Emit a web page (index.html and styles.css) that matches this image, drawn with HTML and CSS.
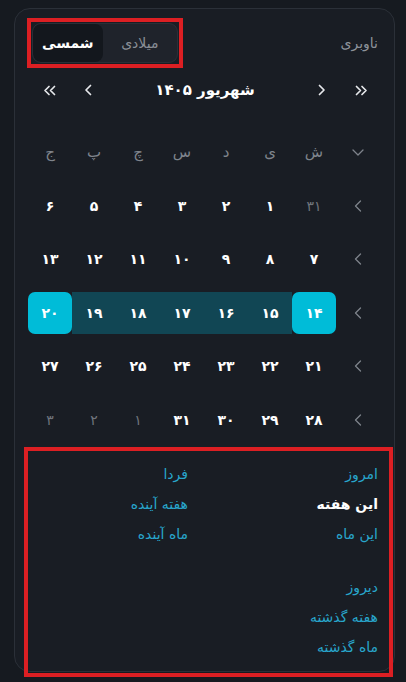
FILE: index.html
```html
<!DOCTYPE html>
<html lang="fa">
<head>
<meta charset="utf-8">
<title>تقویم</title>
<link rel="stylesheet" href="styles.css">
</head>
<body>
<div class="card">
  <div class="head">
    <span class="label">ناوبری</span>
    <div class="seg">
      <span class="opt">میلادی</span>
      <span class="opt on">شمسی</span>
    </div>
  </div>

  <div class="nav">
    <button class="nb"><svg width="13" height="11" viewBox="0 0 13 11"><path d="M1.5 1.5 L5.5 5.5 L1.5 9.5 M7 1.5 L11 5.5 L7 9.5" fill="none" stroke="currentColor" stroke-width="1.7" stroke-linecap="round" stroke-linejoin="round"/></svg></button>
    <button class="nb"><svg width="8" height="12" viewBox="0 0 8 12"><path d="M1.5 1.5 L6 6 L1.5 10.5" fill="none" stroke="currentColor" stroke-width="1.7" stroke-linecap="round" stroke-linejoin="round"/></svg></button>
    <div class="title">شهریور ۱۴۰۵</div>
    <button class="nb"><svg width="8" height="12" viewBox="0 0 8 12"><path d="M6.5 1.5 L2 6 L6.5 10.5" fill="none" stroke="currentColor" stroke-width="1.7" stroke-linecap="round" stroke-linejoin="round"/></svg></button>
    <button class="nb"><svg width="13" height="11" viewBox="0 0 13 11"><path d="M6 1.5 L2 5.5 L6 9.5 M11.5 1.5 L7.5 5.5 L11.5 9.5" fill="none" stroke="currentColor" stroke-width="1.7" stroke-linecap="round" stroke-linejoin="round"/></svg></button>
  </div>

  <div class="grid">
    <span class="wk"><svg width="12" height="7" viewBox="0 0 12 7"><path d="M1 1 L6 6 L11 1" fill="none" stroke="currentColor" stroke-width="1.3" stroke-linecap="round" stroke-linejoin="round"/></svg></span>
    <span class="wd">ش</span><span class="wd">ی</span><span class="wd">د</span><span class="wd">س</span><span class="wd">چ</span><span class="wd">پ</span><span class="wd">ج</span>

    <span class="wk"><svg width="8" height="12" viewBox="0 0 8 12"><path d="M6.5 1 L1.5 6 L6.5 11" fill="none" stroke="currentColor" stroke-width="1.3" stroke-linecap="round" stroke-linejoin="round"/></svg></span>
    <span class="d out">۳۱</span><span class="d">۱</span><span class="d">۲</span><span class="d">۳</span><span class="d">۴</span><span class="d">۵</span><span class="d">۶</span>

    <span class="wk"><svg width="8" height="12" viewBox="0 0 8 12"><path d="M6.5 1 L1.5 6 L6.5 11" fill="none" stroke="currentColor" stroke-width="1.3" stroke-linecap="round" stroke-linejoin="round"/></svg></span>
    <span class="d">۷</span><span class="d">۸</span><span class="d">۹</span><span class="d">۱۰</span><span class="d">۱۱</span><span class="d">۱۲</span><span class="d">۱۳</span>

    <span class="wk"><svg width="8" height="12" viewBox="0 0 8 12"><path d="M6.5 1 L1.5 6 L6.5 11" fill="none" stroke="currentColor" stroke-width="1.3" stroke-linecap="round" stroke-linejoin="round"/></svg></span>
    <span class="d sel">۱۴</span><span class="d range">۱۵</span><span class="d range">۱۶</span><span class="d range">۱۷</span><span class="d range">۱۸</span><span class="d range">۱۹</span><span class="d sel">۲۰</span>

    <span class="wk"><svg width="8" height="12" viewBox="0 0 8 12"><path d="M6.5 1 L1.5 6 L6.5 11" fill="none" stroke="currentColor" stroke-width="1.3" stroke-linecap="round" stroke-linejoin="round"/></svg></span>
    <span class="d">۲۱</span><span class="d">۲۲</span><span class="d">۲۳</span><span class="d">۲۴</span><span class="d">۲۵</span><span class="d">۲۶</span><span class="d">۲۷</span>

    <span class="wk"><svg width="8" height="12" viewBox="0 0 8 12"><path d="M6.5 1 L1.5 6 L6.5 11" fill="none" stroke="currentColor" stroke-width="1.3" stroke-linecap="round" stroke-linejoin="round"/></svg></span>
    <span class="d">۲۸</span><span class="d">۲۹</span><span class="d">۳۰</span><span class="d">۳۱</span><span class="d out">۱</span><span class="d out">۲</span><span class="d out">۳</span>
  </div>

  <div class="links">
    <div class="lgroup">
      <a class="lk">امروز</a><a class="lk">فردا</a>
      <a class="lk active">این هفته</a><a class="lk">هفته آینده</a>
      <a class="lk">این ماه</a><a class="lk">ماه آینده</a>
    </div>
    <div class="lgroup">
      <a class="lk">دیروز</a><span></span>
      <a class="lk">هفته گذشته</a><span></span>
      <a class="lk">ماه گذشته</a><span></span>
    </div>
  </div>
</div>

<div class="mark mark-top"></div>
<div class="mark mark-bottom"></div>
</body>
</html>
```

FILE: styles.css
```css
* { box-sizing: border-box; }

html, body {
  margin: 0;
  padding: 0;
  background: #161a20;
}

body {
  width: 406px;
  height: 682px;
  overflow: hidden;
  font-family: "DejaVu Sans", "Noto Sans", sans-serif;
  color: #e8eaed;
  direction: ltr;
}

.card {
  direction: rtl;
  margin: 8px 11px 0 14px;
  width: 381px;
  height: 664px;
  border: 1px solid #2b3038;
  border-radius: 16px;
  background: #191d24;
  display: flex;
  flex-direction: column;
}

.head {
  display: flex;
  align-items: center;
  justify-content: space-between;
  padding: 14px 16px 0 17px;
  height: 54px;
}

.label {
  font-size: 14px;
  color: #8d929a;
}

.seg {
  display: flex;
  width: 146px;
  height: 40px;
  border: 1px solid #2a2f37;
  border-radius: 9px;
  background: #1f232b;
  overflow: hidden;
}

.opt {
  display: flex;
  align-items: center;
  justify-content: center;
  font-size: 14px;
  color: #8a8f97;
}

.opt:first-child { width: 75px; }

.opt.on {
  width: 70px;
  background: #13171d;
  color: #ffffff;
  font-weight: 700;
  border-radius: 8px;
}

.nav {
  display: flex;
  align-items: center;
  height: 32px;
  margin-top: 11px;
  padding: 0 17px 0 18px;
  gap: 7px;
}

.nb {
  width: 32px;
  height: 32px;
  border: 0;
  padding: 0;
  background: transparent;
  color: #e6e8eb;
  display: flex;
  align-items: center;
  justify-content: center;
}

.title {
  flex: 1;
  text-align: center;
  font-size: 15px;
  font-weight: 700;
  color: #ffffff;
}

.grid {
  display: grid;
  grid-template-columns: repeat(8, 44px);
  grid-auto-rows: 42px;
  row-gap: 11.5px;
  margin-top: 25px;
  padding: 0 14px 0 13px;
}

.grid > span {
  display: flex;
  align-items: center;
  justify-content: center;
}

.wk { color: #7e838b; }

.wd {
  font-size: 15px;
  color: #7f848c;
}

.d {
  font-size: 14px;
  font-weight: 700;
  color: #ffffff;
}

.d.out {
  font-weight: 400;
  color: #6f747c;
}

.d.range { background: #114654; }

.d.sel {
  background: #00bcd8;
  color: #ffffff;
  border-radius: 7px;
}

.links {
  margin-top: 18px;
  padding: 0 16px 0 14px;
  display: flex;
  flex-direction: column;
  gap: 23px;
}

.lgroup {
  display: grid;
  grid-template-columns: 190px 1fr;
  grid-auto-rows: 30px;
}

.lk {
  display: flex;
  align-items: center;
  font-size: 14px;
  color: #28a6cc;
  text-decoration: none;
}

.lk.active {
  color: #ffffff;
  font-weight: 600;
}

.mark {
  position: absolute;
  border: 4px solid #dc1f23;
  pointer-events: none;
}

.mark-top {
  left: 27px;
  top: 18px;
  width: 156px;
  height: 50px;
}

.mark-bottom {
  left: 24px;
  top: 447px;
  width: 369px;
  height: 230px;
}
```
